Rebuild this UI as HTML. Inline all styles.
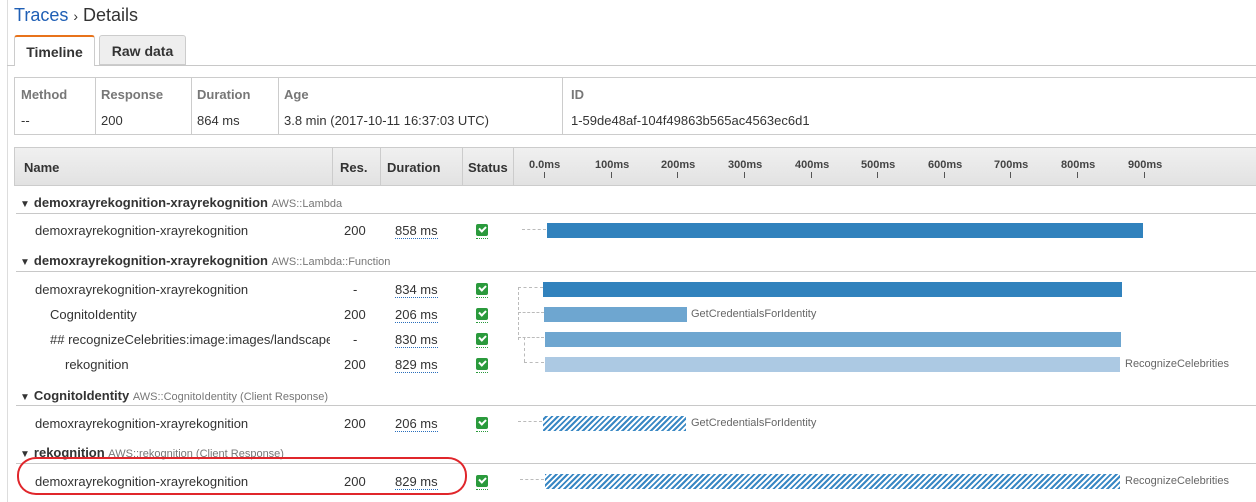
<!DOCTYPE html>
<html><head><meta charset="utf-8"><style>
*{margin:0;padding:0;box-sizing:border-box}
body{width:1256px;height:502px;background:#fff;font-family:"Liberation Sans",Arial,sans-serif;color:#333;position:relative;overflow:hidden;font-size:13px}
.a{position:absolute;white-space:nowrap}
.b{font-weight:bold}
.hl{position:absolute;height:1px;background:#c8c8c8}
.vl{position:absolute;width:1px;background:#ccc}
.bar{position:absolute;height:15px}
.d{background:#3182bd}.m{background:#6ea6d0}.l{background:#acc9e3}
.h{background:repeating-linear-gradient(-45deg,#3a88c4 0 2px,#fff 2px 4px)}
.ck{position:absolute;width:12px;height:12px;background:#2a9a3c;border-radius:2px}
.ck:after{content:"";position:absolute;left:3px;top:2px;width:5px;height:3px;border-left:2px solid #fff;border-bottom:2px solid #fff;transform:rotate(-45deg)}
.ck:before{content:"";position:absolute;left:0;top:14px;width:12px;border-top:1px dotted #2a9a3c}
.dur{border-bottom:1px dotted #2a6ebb}
.dash{position:absolute;border-top:1px dashed #bbb}
.dashv{position:absolute;border-left:1px dashed #bbb}
.tri{font-size:10px;margin-right:4px;color:#333}
.sm{font-size:11px;color:#777;font-weight:normal}
.lab{font-size:11px;color:#666}
.tk{position:absolute;font-size:11px;font-weight:bold;color:#444;white-space:nowrap}
.tm{position:absolute;width:1px;height:6px;background:#555;top:172px}
</style></head><body>
<div class="vl" style="left:7px;top:0;height:502px;background:#ddd"></div>
<div class="a" style="left:14px;top:5px;font-size:18px"><span style="color:#1f5fb5">Traces</span> <span style="font-size:14px">›</span> Details</div>
<div class="a b" style="left:14px;top:35px;width:81px;height:31px;border:1px solid #ccc;border-top:2px solid #e8731b;border-bottom:none;background:#fff;border-radius:3px 3px 0 0;text-align:center;line-height:30px;font-size:14px;z-index:2">Timeline</div>
<div class="a b" style="left:99px;top:35px;width:87px;height:30px;border:1px solid #ccc;background:#eee;border-radius:3px 3px 0 0;text-align:center;line-height:30px;font-size:14px">Raw data</div>
<div class="hl" style="left:7px;top:65px;width:1249px"></div>
<div class="a" style="left:14px;top:77px;width:1250px;height:58px;border:1px solid #ccc"></div>
<div class="vl" style="left:95px;top:77px;height:58px"></div>
<div class="vl" style="left:191px;top:77px;height:58px"></div>
<div class="vl" style="left:278px;top:77px;height:58px"></div>
<div class="vl" style="left:562px;top:77px;height:58px"></div>
<div class="a b" style="left:21px;top:87px;color:#777">Method</div>
<div class="a" style="left:21px;top:113px">--</div>
<div class="a b" style="left:101px;top:87px;color:#777">Response</div>
<div class="a" style="left:101px;top:113px">200</div>
<div class="a b" style="left:197px;top:87px;color:#777">Duration</div>
<div class="a" style="left:197px;top:113px">864 ms</div>
<div class="a b" style="left:284px;top:87px;color:#777">Age</div>
<div class="a" style="left:284px;top:113px">3.8 min (2017-10-11 16:37:03 UTC)</div>
<div class="a b" style="left:571px;top:87px;color:#777">ID</div>
<div class="a" style="left:571px;top:113px">1-59de48af-104f49863b565ac4563ec6d1</div>
<div class="a" style="left:14px;top:147px;width:1250px;height:39px;border:1px solid #ccc;background:linear-gradient(#f0f0f0,#e2e2e2)"></div>
<div class="vl" style="left:332px;top:148px;height:37px"></div>
<div class="vl" style="left:380px;top:148px;height:37px"></div>
<div class="vl" style="left:462px;top:148px;height:37px"></div>
<div class="vl" style="left:513px;top:148px;height:37px"></div>
<div class="a b" style="left:24px;top:160px">Name</div>
<div class="a b" style="left:340px;top:160px">Res.</div>
<div class="a b" style="left:387px;top:160px">Duration</div>
<div class="a b" style="left:468px;top:160px">Status</div>
<div class="a b" style="left:20px;top:195px"><span class="tri">▼</span>demoxrayrekognition-xrayrekognition <span class="sm">AWS::Lambda</span></div>
<div class="hl" style="left:16px;top:213px;width:1240px"></div>
<div class="a b" style="left:20px;top:253px"><span class="tri">▼</span>demoxrayrekognition-xrayrekognition <span class="sm">AWS::Lambda::Function</span></div>
<div class="hl" style="left:16px;top:271px;width:1240px"></div>
<div class="a b" style="left:20px;top:388px"><span class="tri">▼</span>CognitoIdentity <span class="sm">AWS::CognitoIdentity (Client Response)</span></div>
<div class="hl" style="left:16px;top:405px;width:1240px"></div>
<div class="a b" style="left:20px;top:445px"><span class="tri">▼</span>rekognition <span class="sm">AWS::rekognition (Client Response)</span></div>
<div class="hl" style="left:16px;top:463px;width:1240px"></div>
<div class="a" style="left:35px;top:223px">demoxrayrekognition-xrayrekognition</div>
<div class="a" style="left:344px;top:223px">200</div><div class="a dur" style="left:395px;top:223px">858 ms</div><div class="ck" style="left:476px;top:224px"></div>
<div class="a" style="left:35px;top:282px">demoxrayrekognition-xrayrekognition</div>
<div class="a" style="left:353px;top:282px">-</div><div class="a dur" style="left:395px;top:282px">834 ms</div><div class="ck" style="left:476px;top:283px"></div>
<div class="a" style="left:50px;top:307px">CognitoIdentity</div>
<div class="a" style="left:344px;top:307px">200</div><div class="a dur" style="left:395px;top:307px">206 ms</div><div class="ck" style="left:476px;top:308px"></div>
<div class="a" style="left:50px;top:332px;width:280px;overflow:hidden">## recognizeCelebrities:image:images/landscape</div>
<div class="a" style="left:353px;top:332px">-</div><div class="a dur" style="left:395px;top:332px">830 ms</div><div class="ck" style="left:476px;top:333px"></div>
<div class="a" style="left:65px;top:357px">rekognition</div>
<div class="a" style="left:344px;top:357px">200</div><div class="a dur" style="left:395px;top:357px">829 ms</div><div class="ck" style="left:476px;top:358px"></div>
<div class="a" style="left:35px;top:416px">demoxrayrekognition-xrayrekognition</div>
<div class="a" style="left:344px;top:416px">200</div><div class="a dur" style="left:395px;top:416px">206 ms</div><div class="ck" style="left:476px;top:417px"></div>
<div class="a" style="left:35px;top:474px">demoxrayrekognition-xrayrekognition</div>
<div class="a" style="left:344px;top:474px">200</div><div class="a dur" style="left:395px;top:474px">829 ms</div><div class="ck" style="left:476px;top:475px"></div>
<div class="a" style="left:17px;top:457px;width:450px;height:38px;border:2px solid #e0262b;border-radius:19px/18px"></div>
<div class="dash" style="left:522px;top:229px;width:24px"></div>
<div class="bar d" style="left:547px;top:223px;width:596px"></div>
<div class="dash" style="left:518px;top:287px;width:25px"></div>
<div class="dashv" style="left:518px;top:287px;height:53px"></div>
<div class="dash" style="left:518px;top:312px;width:26px"></div>
<div class="dash" style="left:518px;top:337px;width:26px"></div>
<div class="dashv" style="left:524px;top:337px;height:25px"></div>
<div class="dash" style="left:524px;top:362px;width:20px"></div>
<div class="bar d" style="left:543px;top:282px;width:579px"></div>
<div class="bar m" style="left:544px;top:307px;width:143px"></div>
<div class="a lab" style="left:691px;top:308px">GetCredentialsForIdentity</div>
<div class="bar m" style="left:545px;top:332px;width:576px"></div>
<div class="bar l" style="left:545px;top:357px;width:575px"></div>
<div class="a lab" style="left:1125px;top:358px">RecognizeCelebrities</div>
<div class="dash" style="left:518px;top:421px;width:24px"></div>
<div class="bar h" style="left:543px;top:416px;width:143px"></div>
<div class="a lab" style="left:691px;top:417px">GetCredentialsForIdentity</div>
<div class="dash" style="left:520px;top:479px;width:24px"></div>
<div class="bar h" style="left:545px;top:474px;width:575px"></div>
<div class="a lab" style="left:1125px;top:475px">RecognizeCelebrities</div>
<div class="tk" style="left:529px;top:159px">0.0ms</div><div class="tm" style="left:544px"></div>
<div class="tk" style="left:595px;top:159px">100ms</div><div class="tm" style="left:611px"></div>
<div class="tk" style="left:661px;top:159px">200ms</div><div class="tm" style="left:677px"></div>
<div class="tk" style="left:728px;top:159px">300ms</div><div class="tm" style="left:744px"></div>
<div class="tk" style="left:795px;top:159px">400ms</div><div class="tm" style="left:811px"></div>
<div class="tk" style="left:861px;top:159px">500ms</div><div class="tm" style="left:877px"></div>
<div class="tk" style="left:928px;top:159px">600ms</div><div class="tm" style="left:944px"></div>
<div class="tk" style="left:994px;top:159px">700ms</div><div class="tm" style="left:1010px"></div>
<div class="tk" style="left:1061px;top:159px">800ms</div><div class="tm" style="left:1077px"></div>
<div class="tk" style="left:1128px;top:159px">900ms</div><div class="tm" style="left:1144px"></div>
</body></html>
